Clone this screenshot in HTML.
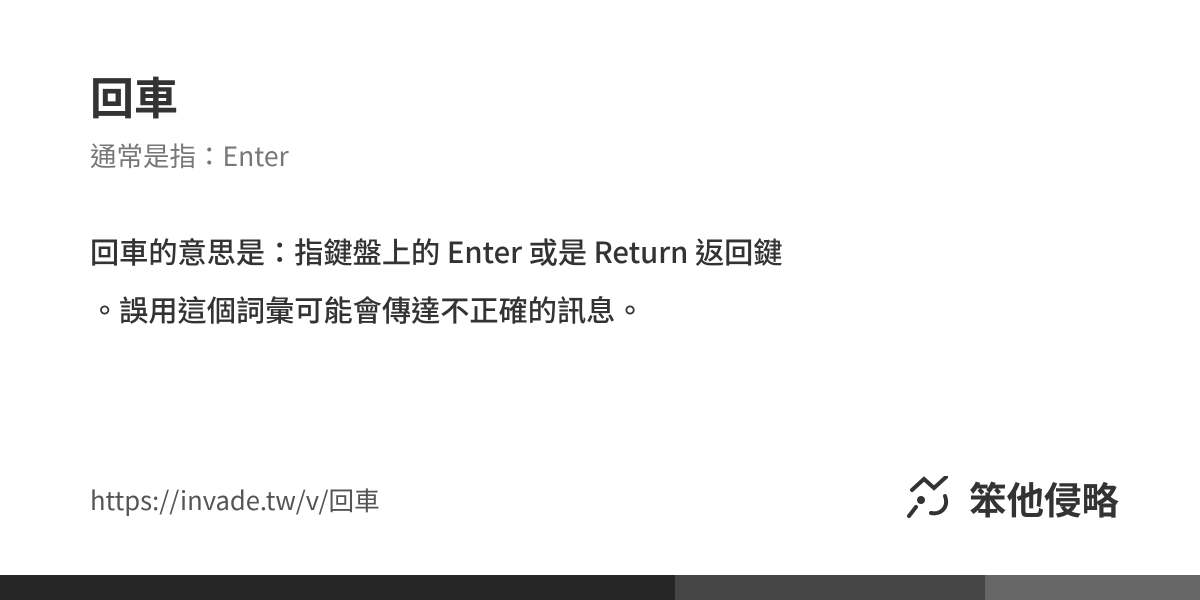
<!DOCTYPE html>
<html><head><meta charset="utf-8"><style>
body{margin:0;width:1200px;height:600px;background:#fff;position:relative;overflow:hidden;font-family:"Liberation Sans","Noto Sans CJK TC",sans-serif;}
.t{position:absolute;left:90px;top:67px;font-size:44px;font-weight:bold;color:#333;line-height:56px;font-family:"Noto Sans CJK TC",sans-serif;}
.s{position:absolute;left:90px;top:138px;font-size:26.5px;color:#777;line-height:34px;font-family:"Noto Sans CJK TC",sans-serif;}
.b{position:absolute;left:90px;top:222px;width:760px;font-size:29.2px;font-weight:500;color:#333;line-height:58px;font-family:"Noto Sans CJK TC",sans-serif;}
.u{position:absolute;left:90px;top:484px;font-size:25.6px;color:#555;line-height:32px;font-family:"Noto Sans CJK TC",sans-serif;}
.l{position:absolute;left:969px;top:473px;font-size:37.5px;font-weight:bold;color:#333;line-height:50px;font-family:"Noto Sans CJK TC",sans-serif;}
.bar{position:absolute;top:575px;height:25px;}
</style></head><body>
<div class="t">回車</div>
<div class="s">通常是指：Enter</div>
<div class="b">回車的意思是：指鍵盤上的 Enter 或是 Return 返回鍵<br>。誤用這個詞彙可能會傳達不正確的訊息。</div>
<div class="u">https://invade.tw/v/回車</div>
<svg style="position:absolute;left:905px;top:476px" width="50" height="46" viewBox="0 0 50 46" fill="none" stroke="#333" stroke-width="4" stroke-linecap="round">
<path d="M7 14 L19 3 L29 12 L41 1"/>
<circle cx="16" cy="24" r="4" fill="#333" stroke="none"/>
<path d="M11 31 L4 40"/>
<path d="M40 20 C44 31 36 39 26 37"/>
</svg>
<div class="l">笨他侵略</div>
<div class="bar" style="left:0;width:675px;background:#262626"></div>
<div class="bar" style="left:675px;width:310px;background:#464646"></div>
<div class="bar" style="left:985px;width:215px;background:#666"></div>
</body></html>
